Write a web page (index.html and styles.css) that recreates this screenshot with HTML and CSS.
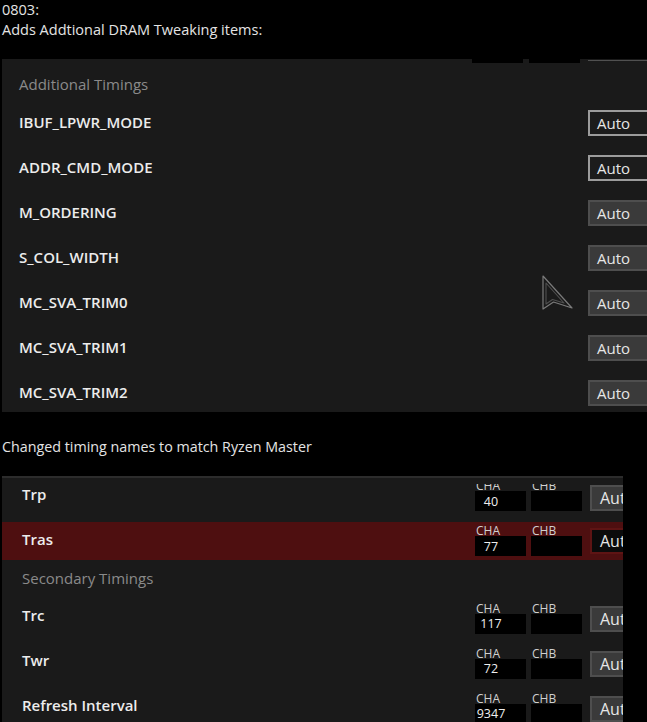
FILE: index.html
```html
<!DOCTYPE html>
<html>
<head>
<meta charset="utf-8">
<link rel="stylesheet" href="styles.css">
</head>
<body>
<div class="note">0803:<br>Adds Addtional DRAM Tweaking items:</div>
<div class="panel p1">
  <div class="strip"><span class="sb"></span><span class="sb"></span><span class="sline"></span></div>
  <div class="hdr">Additional Timings</div>
  <div class="row"><span class="name">IBUF_LPWR_MODE</span><span class="auto outl">Auto</span></div>
  <div class="row"><span class="name">ADDR_CMD_MODE</span><span class="auto outl">Auto</span></div>
  <div class="row"><span class="name">M_ORDERING</span><span class="auto grey">Auto</span></div>
  <div class="row"><span class="name">S_COL_WIDTH</span><span class="auto grey">Auto</span></div>
  <div class="row"><span class="name">MC_SVA_TRIM0</span><span class="auto grey">Auto</span></div>
  <div class="row"><span class="name">MC_SVA_TRIM1</span><span class="auto grey">Auto</span></div>
  <div class="row"><span class="name">MC_SVA_TRIM2</span><span class="auto grey">Auto</span></div>
  <svg class="cursor" width="34" height="38" viewBox="0 0 34 38">
    <polygon points="2,2 31,34 12.5,28 2,35" fill="none" stroke="#7a7a7a" stroke-width="1.2" stroke-linejoin="round"/>
    <polygon points="5,9 23,29 11.5,25.5 5,30" fill="none" stroke="#505050" stroke-width="1.1" stroke-linejoin="round"/>
  </svg>
</div>
<div class="note2">Changed timing names to match Ryzen Master</div>
<div class="panel2">
  <div class="inner">
    <div class="trow first">
      <span class="name">Trp</span>
      <div class="ch"><div class="lbl clip"><span>CHA</span></div><div class="val"><span>40</span></div></div>
      <div class="ch"><div class="lbl clip"><span>CHB</span></div><div class="val"></div></div>
      <span class="auto grey a2">Aut</span>
    </div>
    <div class="trow sel">
      <span class="name">Tras</span>
      <div class="ch"><div class="lbl">CHA</div><div class="val"><span>77</span></div></div>
      <div class="ch"><div class="lbl">CHB</div><div class="val"></div></div>
      <span class="auto red a2">Aut</span>
    </div>
    <div class="hdr2">Secondary Timings</div>
    <div class="trow">
      <span class="name">Trc</span>
      <div class="ch"><div class="lbl">CHA</div><div class="val"><span>117</span></div></div>
      <div class="ch"><div class="lbl">CHB</div><div class="val"></div></div>
      <span class="auto grey a2">Aut</span>
    </div>
    <div class="trow">
      <span class="name">Twr</span>
      <div class="ch"><div class="lbl">CHA</div><div class="val"><span>72</span></div></div>
      <div class="ch"><div class="lbl">CHB</div><div class="val"></div></div>
      <span class="auto grey a2">Aut</span>
    </div>
    <div class="trow">
      <span class="name">Refresh Interval</span>
      <div class="ch"><div class="lbl">CHA</div><div class="val"><span>9347</span></div></div>
      <div class="ch"><div class="lbl">CHB</div><div class="val"></div></div>
      <span class="auto grey a2">Aut</span>
    </div>
  </div>
</div>
</body>
</html>
```
FILE: styles.css
```css
html, body {
  margin: 0;
  padding: 0;
  background: #000;
  overflow: hidden;
}
body {
  width: 647px;
  height: 722px;
  font-family: "Open Sans", "Noto Sans", sans-serif;
}
.note {
  color: #e4e4e4;
  font-size: 14.5px;
  line-height: 20px;
  padding-left: 2px;
  height: 59px;
}
.panel {
  margin-left: 2px;
  width: 690px;
  height: 353px;
  background: #1a1a1a;
  overflow: hidden;
  position: relative;
}
.strip {
  height: 4px;
  display: flex;
  padding-left: 470px;
  gap: 6px;
}
.sb {
  width: 51px;
  height: 4px;
  background: #000;
}
.sline {
  flex: 1;
  margin-left: 2px;
  height: 1px;
  margin-top: 1px;
  background: #505050;
}
.hdr {
  height: 37px;
  box-sizing: border-box;
  padding-top: 11px;
  padding-left: 17px;
  line-height: 20px;
  font-size: 15px;
  color: #8a8a8a;
}
.row {
  height: 45px;
  display: flex;
  align-items: center;
  padding-left: 17px;
  padding-right: 22px;
}
.name {
  flex: 1;
  color: #ececec;
  font-size: 15px;
  font-weight: 600;
  padding-bottom: 2px;
}
.auto {
  box-sizing: border-box;
  width: 82px;
  height: 26px;
  padding-left: 7px;
  font-size: 15px;
  line-height: 22px;
  color: #e6e6e6;
}
.outl {
  border: 2px solid #9c9c9c;
  background: #1c1c1c;
}
.grey {
  border: 2px solid #4e4e4e;
  background: #3a3a3a;
}
.red {
  border: 2px solid #5e1414;
  background: #0b0b0b;
}
.cursor {
  position: absolute;
  left: 539px;
  top: 215px;
}
.note2 {
  color: #e4e4e4;
  font-size: 14.3px;
  line-height: 20px;
  padding-left: 2px;
  margin-top: 25px;
  margin-bottom: 19px;
}
.panel2 {
  margin-left: 2px;
  width: 621px;
  height: 260px;
  background: #1a1a1a;
  border-top: 2px solid #2c2c2c;
  overflow: hidden;
}
.inner {
  width: 668px;
  padding-left: 20px;
  box-sizing: border-box;
}
.trow {
  display: grid;
  grid-template-columns: 448px 51px 51px 80px;
  column-gap: 5px;
  align-items: center;
  height: 45px;
}
.trow .name {
  padding-bottom: 7px;
}
.trow.first {
  height: 44px;
  box-sizing: border-box;
  padding-bottom: 5px;
}
.trow.sel {
  height: 38px;
  background: #4e0f10;
  margin-left: -20px;
  padding-left: 20px;
}
.trow.sel .name {
  padding-bottom: 4px;
}
.hdr2 {
  height: 36px;
  box-sizing: border-box;
  padding-top: 8px;
  line-height: 20px;
  font-size: 15px;
  color: #8a8a8a;
}
.ch {
  display: flex;
  flex-direction: column;
}
.lbl {
  height: 10px;
  line-height: 10px;
  font-size: 12px;
  color: #d0d0d0;
  padding-left: 1px;
  display: flex;
  align-items: flex-end;
}
.lbl.clip {
  height: 7px;
  overflow: hidden;
}
.val {
  height: 20px;
  background: #000;
  display: flex;
  align-items: center;
}
.val span {
  width: 32px;
  text-align: center;
  font-size: 12.5px;
  color: #eeeeee;
}
.a2 {
  width: 80px;
  margin-left: 3px;
  padding-left: 8px;
  font-size: 16px;
}
```
